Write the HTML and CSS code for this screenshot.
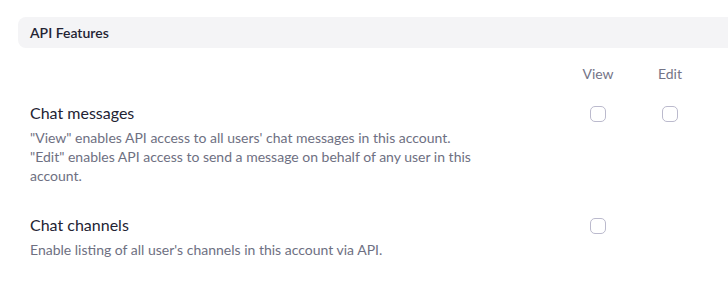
FILE: index.html
```html
<!DOCTYPE html>
<html lang="en">
<head>
<meta charset="utf-8">
<title>API Features</title>
<link rel="stylesheet" href="styles.css">
</head>
<body>
<section class="section">
  <div class="section-header">API Features</div>
  <div class="col-head">
    <span class="spacer"></span>
    <span class="col-label">View</span>
    <span class="col-label">Edit</span>
  </div>
  <div class="row">
    <div class="row-text">
      <div class="row-title">Chat messages</div>
      <div class="row-desc">"View" enables API access to all users' chat messages in this account.<br>"Edit" enables API access to send a message on behalf of any user in this account.</div>
    </div>
    <div class="cell"><span class="checkbox"></span></div>
    <div class="cell"><span class="checkbox"></span></div>
  </div>
  <div class="row">
    <div class="row-text">
      <div class="row-title">Chat channels</div>
      <div class="row-desc">Enable listing of all user's channels in this account via API.</div>
    </div>
    <div class="cell"><span class="checkbox"></span></div>
    <div class="cell"></div>
  </div>
</section>
</body>
</html>
```
FILE: styles.css
```css
html, body {
  margin: 0;
  padding: 0;
  background: #ffffff;
  overflow: hidden;
}
body {
  font-family: Lato, "Open Sans", sans-serif;
  color: #232333;
}
.section {
  padding: 17px 0 0 18px;
}
.section-header {
  height: 31px;
  background: #f4f4f6;
  border-radius: 8px 0 0 8px;
  padding-left: 12px;
  display: flex;
  align-items: center;
  font-size: 14px;
  font-weight: 600;
  color: #232333;
}
.col-head,
.row {
  display: grid;
  grid-template-columns: 1fr 72px 72px;
  padding: 0 22px 0 12px;
}
.col-head {
  margin-top: 16px;
}
.col-label {
  font-size: 14px;
  line-height: 19px;
  color: #747487;
  text-align: center;
}
.row {
  margin-top: 20px;
}
.row + .row {
  margin-top: 30px;
}
.row-text {
  padding-right: 52px;
}
.row-title {
  font-size: 16px;
  line-height: 20px;
  color: #232333;
}
.row-desc {
  margin-top: 5px;
  font-size: 14px;
  line-height: 19px;
  color: #6e7082;
}
.cell {
  display: flex;
  justify-content: center;
  align-items: flex-start;
  padding-top: 3px;
}
.checkbox {
  width: 16px;
  height: 16px;
  box-sizing: border-box;
  border: 1px solid #bbbacd;
  border-radius: 5px;
  background: #fff;
}
```
